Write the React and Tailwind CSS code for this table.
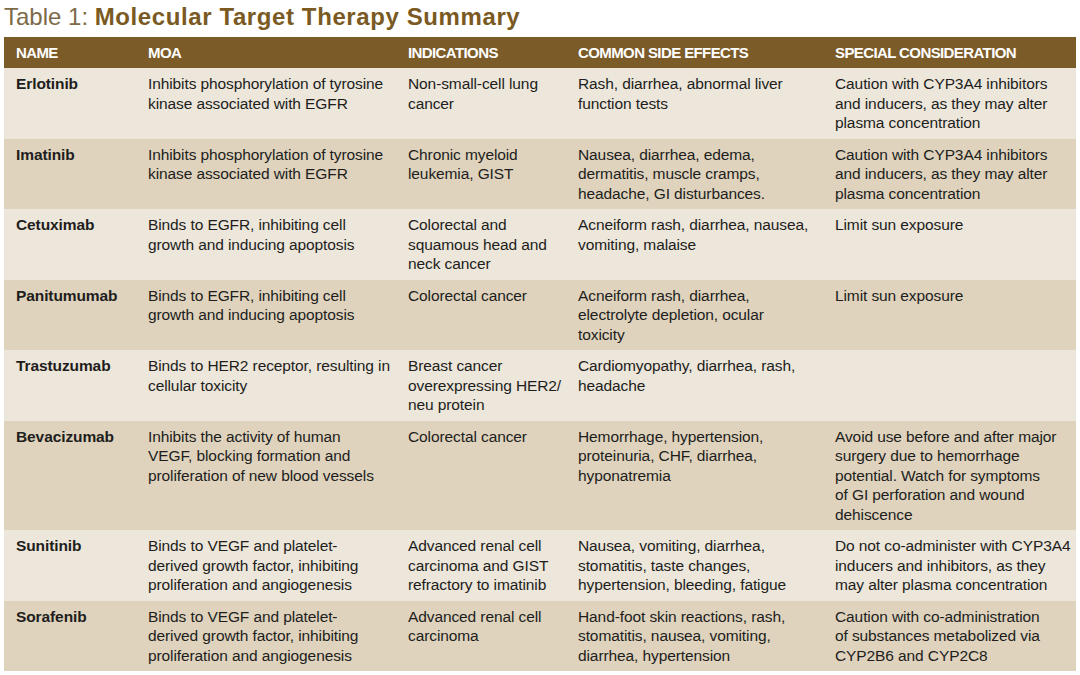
// Table 1: Molecular Target Therapy Summary
import React from "react";

// 각 셀은 원본 표와 같은 줄바꿈을 유지하도록 줄 단위로 나눔
const ROWS = [
  {
    name: "Erlotinib",
    moa: ["Inhibits phosphorylation of tyrosine", "kinase associated with EGFR"],
    ind: ["Non-small-cell lung", "cancer"],
    side: ["Rash, diarrhea, abnormal liver", "function tests"],
    special: ["Caution with CYP3A4 inhibitors", "and inducers, as they may alter", "plasma concentration"],
  },
  {
    name: "Imatinib",
    moa: ["Inhibits phosphorylation of tyrosine", "kinase associated with EGFR"],
    ind: ["Chronic myeloid", "leukemia, GIST"],
    side: ["Nausea, diarrhea, edema,", "dermatitis, muscle cramps,", "headache, GI disturbances."],
    special: ["Caution with CYP3A4 inhibitors", "and inducers, as they may alter", "plasma concentration"],
  },
  {
    name: "Cetuximab",
    moa: ["Binds to EGFR, inhibiting cell", "growth and inducing apoptosis"],
    ind: ["Colorectal and", "squamous head and", "neck cancer"],
    side: ["Acneiform rash, diarrhea, nausea,", "vomiting, malaise"],
    special: ["Limit sun exposure"],
  },
  {
    name: "Panitumumab",
    moa: ["Binds to EGFR, inhibiting cell", "growth and inducing apoptosis"],
    ind: ["Colorectal cancer"],
    side: ["Acneiform rash, diarrhea,", "electrolyte depletion, ocular", "toxicity"],
    special: ["Limit sun exposure"],
  },
  {
    name: "Trastuzumab",
    moa: ["Binds to HER2 receptor, resulting in", "cellular toxicity"],
    ind: ["Breast cancer", "overexpressing HER2/", "neu protein"],
    side: ["Cardiomyopathy, diarrhea, rash,", "headache"],
    special: [],
  },
  {
    name: "Bevacizumab",
    moa: ["Inhibits the activity of human", "VEGF, blocking formation and", "proliferation of new blood vessels"],
    ind: ["Colorectal cancer"],
    side: ["Hemorrhage, hypertension,", "proteinuria, CHF, diarrhea,", "hyponatremia"],
    special: [
      "Avoid use before and after major",
      "surgery due to hemorrhage",
      "potential. Watch for symptoms",
      "of GI perforation and wound",
      "dehiscence",
    ],
  },
  {
    name: "Sunitinib",
    moa: ["Binds to VEGF and platelet-", "derived growth factor, inhibiting", "proliferation and angiogenesis"],
    ind: ["Advanced renal cell", "carcinoma and GIST", "refractory to imatinib"],
    side: ["Nausea, vomiting, diarrhea,", "stomatitis, taste changes,", "hypertension, bleeding, fatigue"],
    special: ["Do not co-administer with CYP3A4", "inducers and inhibitors, as they", "may alter plasma concentration"],
  },
  {
    name: "Sorafenib",
    moa: ["Binds to VEGF and platelet-", "derived growth factor, inhibiting", "proliferation and angiogenesis"],
    ind: ["Advanced renal cell", "carcinoma"],
    side: ["Hand-foot skin reactions, rash,", "stomatitis, nausea, vomiting,", "diarrhea, hypertension"],
    special: ["Caution with co-administration", "of substances metabolized via", "CYP2B6 and CYP2C8"],
  },
];

const HEADERS = ["NAME", "MOA", "INDICATIONS", "COMMON SIDE EFFECTS", "SPECIAL CONSIDERATION"];

function Lines({ lines }) {
  return lines.map((l, i) => (
    <div key={i} className="whitespace-nowrap">
      {l}
    </div>
  ));
}

export default function App() {
  return (
    <div className="w-[1080px] h-[675px] bg-white px-[4px] pt-[2px] font-['Liberation_Sans',Arial,sans-serif]">
      {/* 제목 */}
      <h1 className="h-[35px] text-[24px] leading-[29px] text-[#7d6a48]">
        Table 1:{" "}
        <span className="font-bold text-[#7a5a22] tracking-[0.6px]">Molecular Target Therapy Summary</span>
      </h1>

      <table className="w-[1072px] table-fixed border-collapse text-[15.5px] leading-[19.5px] tracking-[-0.1px] text-[#211d1c]">
        <colgroup>
          <col className="w-[132px]" />
          <col className="w-[260px]" />
          <col className="w-[170px]" />
          <col className="w-[257px]" />
          <col className="w-[253px]" />
        </colgroup>
        <thead>
          <tr className="h-[31px] bg-[#7b5b28]">
            {HEADERS.map((h) => (
              <th
                key={h}
                className="pl-[12px] pr-1 text-left align-middle text-[15px] font-bold tracking-[-0.6px] text-white"
              >
                {h}
              </th>
            ))}
          </tr>
        </thead>
        <tbody>
          {ROWS.map((r, i) => (
            <tr key={r.name} className={i % 2 === 0 ? "bg-[#ede6da]" : "bg-[#dfd3bd]"}>
              <td className="pl-[12px] pr-1 pt-[6px] pb-[6px] align-top font-bold">{r.name}</td>
              <td className="pl-[12px] pr-1 pt-[6px] pb-[6px] align-top">
                <Lines lines={r.moa} />
              </td>
              <td className="pl-[12px] pr-1 pt-[6px] pb-[6px] align-top">
                <Lines lines={r.ind} />
              </td>
              <td className="pl-[12px] pr-1 pt-[6px] pb-[6px] align-top">
                <Lines lines={r.side} />
              </td>
              <td className="pl-[12px] pr-0 pt-[6px] pb-[6px] align-top">
                <Lines lines={r.special} />
              </td>
            </tr>
          ))}
        </tbody>
      </table>
    </div>
  );
}
